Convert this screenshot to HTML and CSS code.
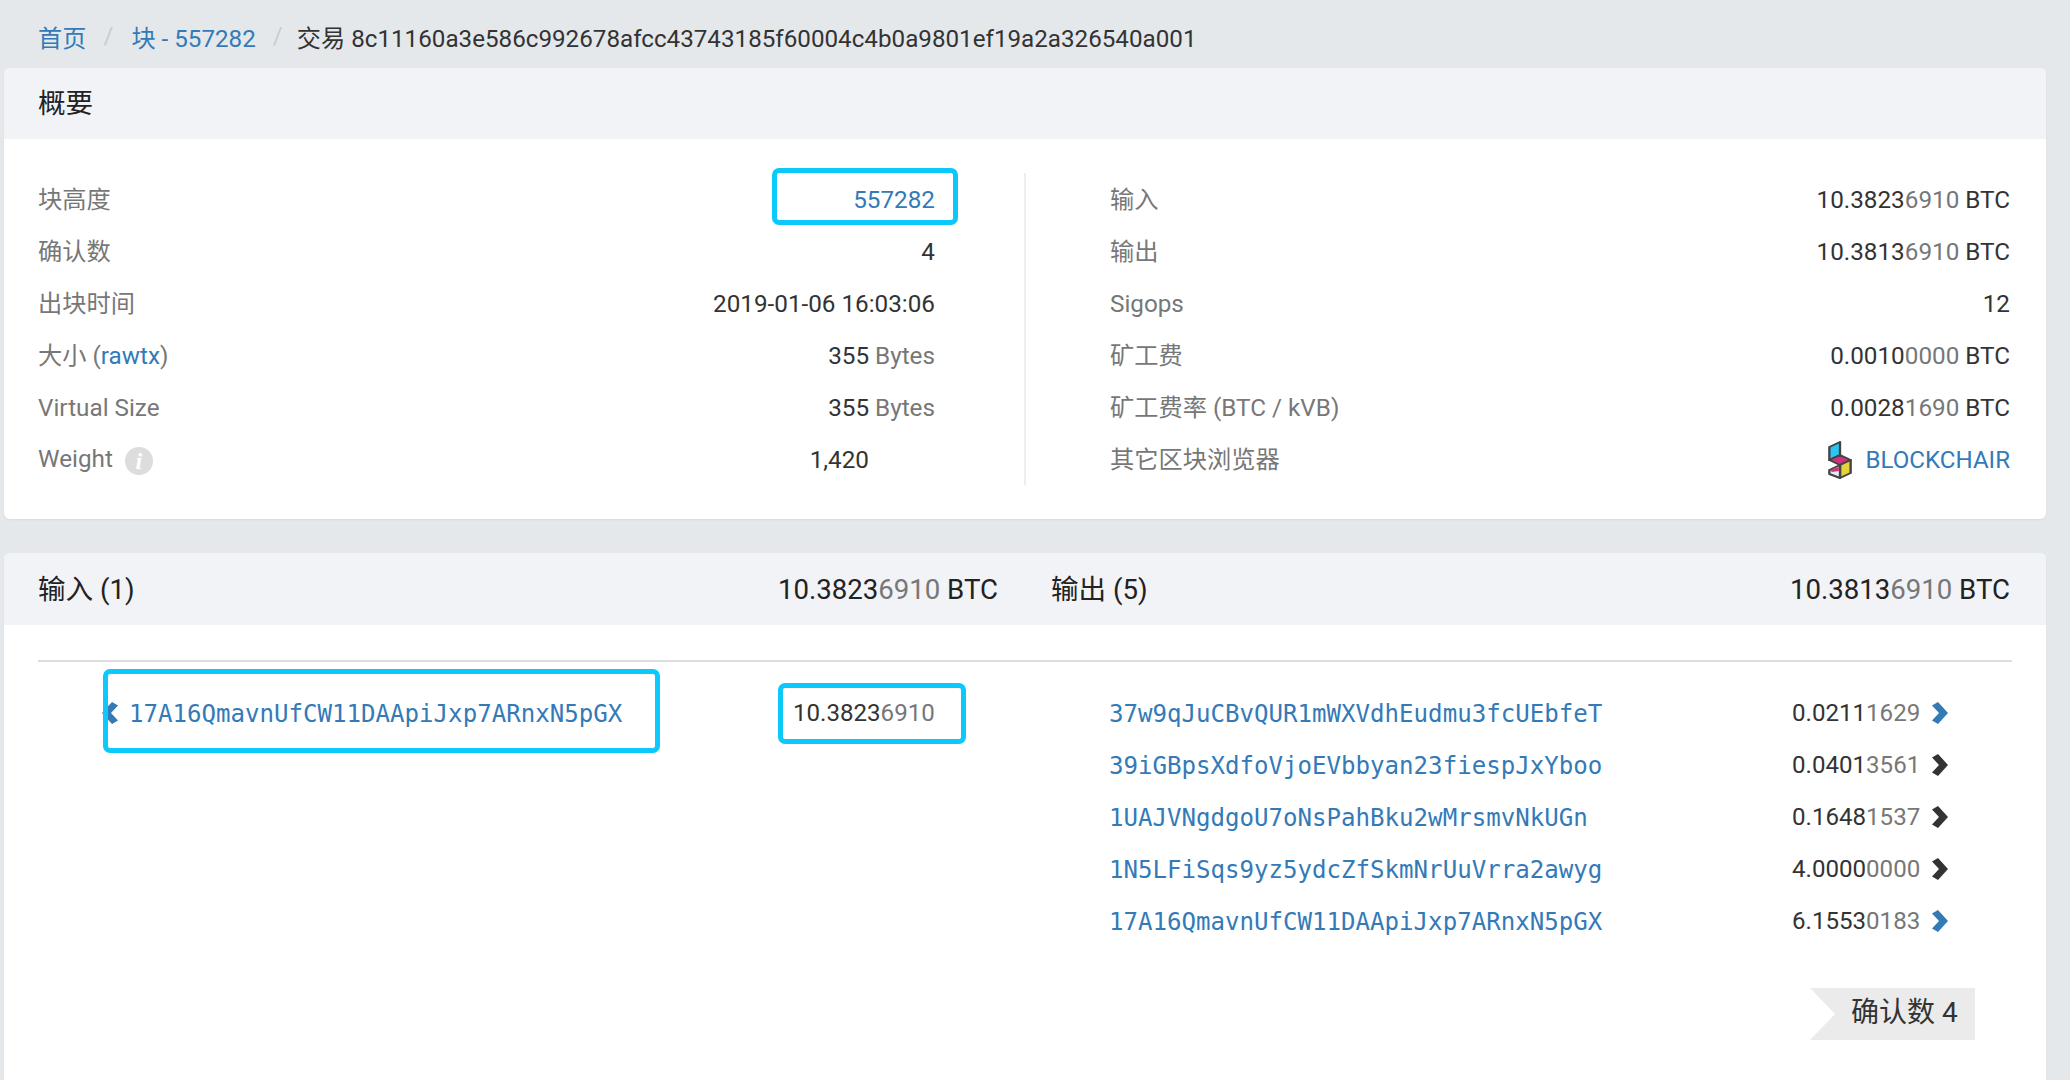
FILE: index.html
```html
<!DOCTYPE html>
<html lang="zh">
<head>
<meta charset="utf-8">
<title>交易</title>
<link rel="stylesheet" href="styles.css">
</head>
<body>
<nav class="crumbs">
  <a href="#">首页</a><span class="sep">/</span><a href="#">块 - 557282</a><span class="sep">/</span><span class="crumb-current">交易 8c11160a3e586c992678afcc43743185f60004c4b0a9801ef19a2a326540a001</span>
</nav>

<section class="card summary">
  <header class="card-head"><span>概要</span></header>
  <div class="summary-body">
    <div class="col col-left">
      <div class="row"><span class="label">块高度</span><span class="val"><a href="#">557282</a><i class="mark mark-height"></i></span></div>
      <div class="row"><span class="label">确认数</span><span class="val">4</span></div>
      <div class="row"><span class="label">出块时间</span><span class="val">2019-01-06 16:03:06</span></div>
      <div class="row"><span class="label">大小 (<a href="#">rawtx</a>)</span><span class="val">355 <span class="dim">Bytes</span></span></div>
      <div class="row"><span class="label">Virtual Size</span><span class="val">355 <span class="dim">Bytes</span></span></div>
      <div class="row row-weight"><span class="label">Weight<i class="info">i</i></span><span class="val">1,420</span></div>
    </div>
    <div class="col col-right">
      <div class="row"><span class="label">输入</span><span class="val">10.3823<span class="dim">6910</span> BTC</span></div>
      <div class="row"><span class="label">输出</span><span class="val">10.3813<span class="dim">6910</span> BTC</span></div>
      <div class="row"><span class="label">Sigops</span><span class="val">12</span></div>
      <div class="row"><span class="label">矿工费</span><span class="val">0.0010<span class="dim">0000</span> BTC</span></div>
      <div class="row"><span class="label">矿工费率 (BTC / kVB)</span><span class="val">0.0028<span class="dim">1690</span> BTC</span></div>
      <div class="row"><span class="label">其它区块浏览器</span><span class="val explorer">
        <svg class="logo" viewBox="3 0 22 38" width="26" height="38" preserveAspectRatio="none" aria-hidden="true">
          <path d="M5 6 L14 1 L14 14 L5 19 Z" fill="#2cc4f0" stroke="#444" stroke-width="2" stroke-linejoin="round"/>
          <path d="M5 19 L14 14 L23 19 L14 24 Z" fill="#d42f7f" stroke="#444" stroke-width="2" stroke-linejoin="round"/>
          <path d="M14 24 L23 19 L23 32 L14 37 Z" fill="#e3d43a" stroke="#444" stroke-width="2" stroke-linejoin="round"/>
          <path d="M5 29 L14 24 L14 37 L5 33 Z" fill="#e9e9f2" stroke="#444" stroke-width="2" stroke-linejoin="round"/>
          <path d="M6 29 L13 26 L13 30 L7 31 Z" fill="#d42f7f"/>
        </svg>
        <a href="#">BLOCKCHAIR</a></span></div>
    </div>
  </div>
</section>

<section class="card tx">
  <header class="card-head tx-head">
    <div class="tx-side tx-side-in"><span>输入 (1)</span><span>10.3823<span class="dim">6910</span> BTC</span></div>
    <div class="tx-side tx-side-out"><span>输出 (5)</span><span>10.3813<span class="dim">6910</span> BTC</span></div>
  </header>
  <div class="tx-body">
    <div class="tx-grid">
      <div class="tx-in">
        <svg class="chev chev-left" viewBox="0 0 16 22" aria-hidden="true"><path d="M10 0 L16 3.5 L9 11 L16 18.5 L10 22 L0 11 Z"/></svg>
        <a class="addr" href="#">17A16QmavnUfCW11DAApiJxp7ARnxN5pGX</a>
        <span class="amount-in">10.3823<span class="dim">6910</span></span>
        <i class="mark mark-addr"></i>
        <i class="mark mark-amount"></i>
      </div>
      <div class="tx-out">
        <div class="out-row"><a class="addr" href="#">37w9qJuCBvQUR1mWXVdhEudmu3fcUEbfeT</a><span class="amount">0.0211<span class="dim">1629</span></span><svg class="chev" viewBox="0 0 16 22" aria-hidden="true"><path d="M6 0 L16 11 L6 22 L0 18.5 L7 11 L0 3.5 Z"/></svg></div>
        <div class="out-row"><a class="addr" href="#">39iGBpsXdfoVjoEVbbyan23fiespJxYboo</a><span class="amount">0.0401<span class="dim">3561</span></span><svg class="chev chev-dark" viewBox="0 0 16 22" aria-hidden="true"><path d="M6 0 L16 11 L6 22 L0 18.5 L7 11 L0 3.5 Z"/></svg></div>
        <div class="out-row"><a class="addr" href="#">1UAJVNgdgoU7oNsPahBku2wMrsmvNkUGn</a><span class="amount">0.1648<span class="dim">1537</span></span><svg class="chev chev-dark" viewBox="0 0 16 22" aria-hidden="true"><path d="M6 0 L16 11 L6 22 L0 18.5 L7 11 L0 3.5 Z"/></svg></div>
        <div class="out-row"><a class="addr" href="#">1N5LFiSqs9yz5ydcZfSkmNrUuVrra2awyg</a><span class="amount">4.0000<span class="dim">0000</span></span><svg class="chev chev-dark" viewBox="0 0 16 22" aria-hidden="true"><path d="M6 0 L16 11 L6 22 L0 18.5 L7 11 L0 3.5 Z"/></svg></div>
        <div class="out-row"><a class="addr" href="#">17A16QmavnUfCW11DAApiJxp7ARnxN5pGX</a><span class="amount">6.1553<span class="dim">0183</span></span><svg class="chev" viewBox="0 0 16 22" aria-hidden="true"><path d="M6 0 L16 11 L6 22 L0 18.5 L7 11 L0 3.5 Z"/></svg></div>
      </div>
    </div>
    <div class="tx-foot"><span class="badge">确认数 4</span></div>
  </div>
</section>
</body>
</html>
```

FILE: styles.css
```css
* { box-sizing: border-box; }
html, body { margin: 0; height: 100%; }
body {
  background: #e4e8eb;
  color: #333;
  font-family: Roboto, "Noto Sans CJK SC", sans-serif;
  font-size: 24.25px;
  padding: 0 24px 0 4px;
  overflow: hidden;
}
a { color: #337ab7; text-decoration: none; }
i { font-style: normal; }
.dim { color: #777; }

/* Same line box for Latin-only and CJK lines, so baselines agree */
.label::before,
.val::before,
.crumbs > *::before,
.card-head span::before {
  content: "\200b";
  font-family: "Noto Sans CJK SC", sans-serif;
}
.sep::before,
.dim::before,
.explorer::before { display: none; content: none; }

.crumbs {
  height: 68px;
  display: flex;
  align-items: center;
  padding: 4px 0 0 34px;
  font-size: 24.2px;
  white-space: nowrap;
}
.crumbs .sep { color: #ccc; margin: 0 18px 0 17px; }
.crumb-current { margin-left: -4px; }

.card {
  background: #fff;
  border-radius: 6px;
  box-shadow: 0 1px 2px rgba(0, 0, 0, .05);
  overflow: hidden;
}
.card-head {
  height: 71px;
  background: #f1f3f7;
  display: flex;
  align-items: center;
  padding: 0 36px 5px 34px;
  font-size: 27.6px;
  color: #222;
}

.summary { height: 451px; }
.summary-body { display: flex; padding: 34px 36px 0 34px; }
.col { height: 312px; }
.col-left { width: 988px; padding-right: 89px; border-right: 2px solid #eee; }
.col-right { flex: 1; padding-left: 84px; }
.row {
  height: 52px;
  padding-bottom: 4px;
  display: flex;
  align-items: center;
  justify-content: space-between;
  white-space: nowrap;
}
.label { color: #777; }
.val { position: relative; color: #333; }
.row-weight .val { margin-right: 66px; }
.info {
  display: inline-block;
  vertical-align: middle;
  margin-left: 12px;
  width: 28px;
  height: 28px;
  border-radius: 50%;
  background: #ddd;
  color: #fff;
  font-family: "Liberation Serif", serif;
  font-style: italic;
  font-weight: 700;
  font-size: 24px;
  line-height: 28px;
  text-align: center;
}
.explorer { display: flex; align-items: center; gap: 13px; font-size: 24.1px; margin-top: 5px; }
.logo { display: block; }

.mark {
  position: absolute;
  display: block;
  border: 5px solid #0cc8fb;
  border-radius: 7px;
  pointer-events: none;
}
.mark-height { right: -23px; top: -12px; width: 186px; height: 57px; }

.tx { margin-top: 34px; height: 600px; }
.tx-head { padding: 0 0 5px; height: 72px; font-size: 27.6px; }
.tx-side { display: flex; justify-content: space-between; white-space: nowrap; }
.tx-side-in { width: 994px; padding-left: 34px; }
.tx-side-out { width: 959px; margin-left: 53px; }

.tx-body { padding: 35px 34px 0; }
.tx-grid {
  border-top: 2px solid #ddd;
  display: flex;
  padding-top: 26px;
}
.tx-in { position: relative; width: 1071px; height: 52px; display: flex; align-items: center; }
.addr { font-family: "DejaVu Sans Mono", monospace; font-size: 24.1px; white-space: nowrap; }
.tx-in .addr { margin-left: 11px; }
.chev { width: 16px; height: 22px; fill: #337ab7; flex: none; margin-bottom: 2px; }
.chev-dark { fill: #333; }
.chev-left { margin-left: 64px; }
.amount-in { position: absolute; left: 755px; font-size: 24.1px; margin-bottom: 2px; }
.mark-addr { left: 65px; top: -19px; width: 557px; height: 84px; }
.mark-amount { left: 740px; top: -5px; width: 188px; height: 61px; }

.tx-out { flex: 1; }
.out-row { height: 52px; display: flex; align-items: center; white-space: nowrap; }
.out-row .addr { width: 683px; }
.amount { width: 127px; font-size: 24.1px; margin-bottom: 2px; }
.out-row .chev { margin-left: 13px; }

.tx-foot { display: flex; justify-content: flex-end; padding: 40px 37px 0 0; }
.badge {
  height: 52px;
  width: 165px;
  background: #ebebeb;
  clip-path: polygon(0 0, 100% 0, 100% 100%, 0 100%, 25px 50%);
  font-size: 28px;
  line-height: 50px;
  padding-left: 41px;
  white-space: nowrap;
}
```
